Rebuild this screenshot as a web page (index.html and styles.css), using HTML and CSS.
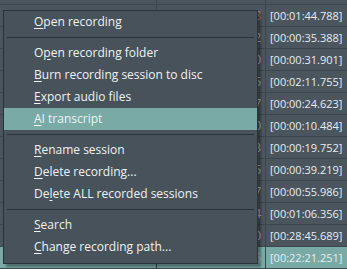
FILE: index.html
```html
<!DOCTYPE html>
<html lang="en">
<head>
  <meta charset="utf-8">
  <meta name="viewport" content="width=device-width, initial-scale=1">
  <title>Recordings</title>
  <link rel="stylesheet" href="styles.css">
</head>
<body>

  <div class="sessions">
    <div class="row"><span class="cell cell-name"></span><span class="cell cell-size"></span><span class="cell cell-time"></span></div>
    <div class="row"><span class="cell cell-name"></span><span class="cell cell-size tone-warm">8</span><span class="cell cell-time">[00:01:44.788]</span></div>
    <div class="row"><span class="cell cell-name"></span><span class="cell cell-size">2</span><span class="cell cell-time">[00:00:35.388]</span></div>
    <div class="row"><span class="cell cell-name"></span><span class="cell cell-size">0</span><span class="cell cell-time">[00:00:31.901]</span></div>
    <div class="row"><span class="cell cell-name"></span><span class="cell cell-size">5</span><span class="cell cell-time">[00:02:11.755]</span></div>
    <div class="row"><span class="cell cell-name"></span><span class="cell cell-size">7</span><span class="cell cell-time">[00:00:24.623]</span></div>
    <div class="row"><span class="cell cell-name"></span><span class="cell cell-size">0</span><span class="cell cell-time">[00:00:10.484]</span></div>
    <div class="row"><span class="cell cell-name"></span><span class="cell cell-size">3</span><span class="cell cell-time">[00:00:19.752]</span></div>
    <div class="row"><span class="cell cell-name"></span><span class="cell cell-size">5</span><span class="cell cell-time">[00:00:39.219]</span></div>
    <div class="row"><span class="cell cell-name"></span><span class="cell cell-size">7</span><span class="cell cell-time">[00:00:55.986]</span></div>
    <div class="row"><span class="cell cell-name"></span><span class="cell cell-size">4</span><span class="cell cell-time">[00:01:06.356]</span></div>
    <div class="row"><span class="cell cell-name"></span><span class="cell cell-size">0</span><span class="cell cell-time">[00:28:45.689]</span></div>
    <div class="row row-selected"><span class="cell cell-name"></span><span class="cell cell-size">5</span><span class="cell cell-time">[00:22:21.251]</span></div>
  </div>

  <div class="menu">
    <div class="menu_item"><u>O</u>pen recording</div>
    <div class="menu_sep"></div>
    <div class="menu_item">O<u>p</u>en recording folder</div>
    <div class="menu_item"><u>B</u>urn recording session to disc</div>
    <div class="menu_item"><u>E</u>xport audio files</div>
    <div class="menu_item menu_item-active"><u>A</u>I transcript</div>
    <div class="menu_sep"></div>
    <div class="menu_item"><u>R</u>ename session</div>
    <div class="menu_item"><u>D</u>elete recording...</div>
    <div class="menu_item">De<u>l</u>ete ALL recorded sessions</div>
    <div class="menu_sep"></div>
    <div class="menu_item"><u>S</u>earch</div>
    <div class="menu_item"><u>C</u>hange recording path...</div>
  </div>

</body>
</html>
```

FILE: styles.css
```css
html,
body {
  height: 100%;
}

body {
  margin: 0;
  overflow: hidden;
  background: #4a555e;
  color: #e4ebf0;
  font-family: "Open Sans", "Noto Sans", sans-serif;
  font-size: 12px;
}

/* table of recorded sessions */
.sessions {
  margin-top: -17px;
}

.row {
  display: flex;
  height: 22px;
  border-bottom: 1px solid #3c464e;
  box-sizing: border-box;
}
.row-selected {
  background: #79aaa6;
}

.cell {
  display: flex;
  align-items: center;
  box-sizing: border-box;
  border-right: 1px solid #3c464e;
  white-space: nowrap;
}
.cell-name {
  width: 157px;
}
.cell-size {
  width: 109px;
  justify-content: flex-end;
  padding-right: 4px;
  color: #b8bcbd;
}
.cell-size.tone-warm {
  color: #c77b5a;
}
.cell-time {
  flex: 1;
  padding-left: 4px;
  border-right: none;
  font-size: 11px;
  color: #e6edf2;
}

/* context menu */
.menu {
  position: absolute;
  left: 3px;
  top: 10px;
  width: 255px;
  box-sizing: border-box;
  padding-bottom: 5px;
  background: #47525a;
  border: 1px solid #2c3338;
  box-shadow: 3px 3px 2px rgba(0, 0, 0, 0.35);
}

.menu_item {
  height: 22px;
  line-height: 22px;
  padding-left: 30px;
  color: #eef3f5;
  white-space: nowrap;
}
.menu_item u {
  text-underline-offset: 2px;
}
.menu_item-active {
  background: #79aaa6;
}

.menu_sep {
  height: 1px;
  margin: 4px 3px;
  background: #2c3338;
}
```
